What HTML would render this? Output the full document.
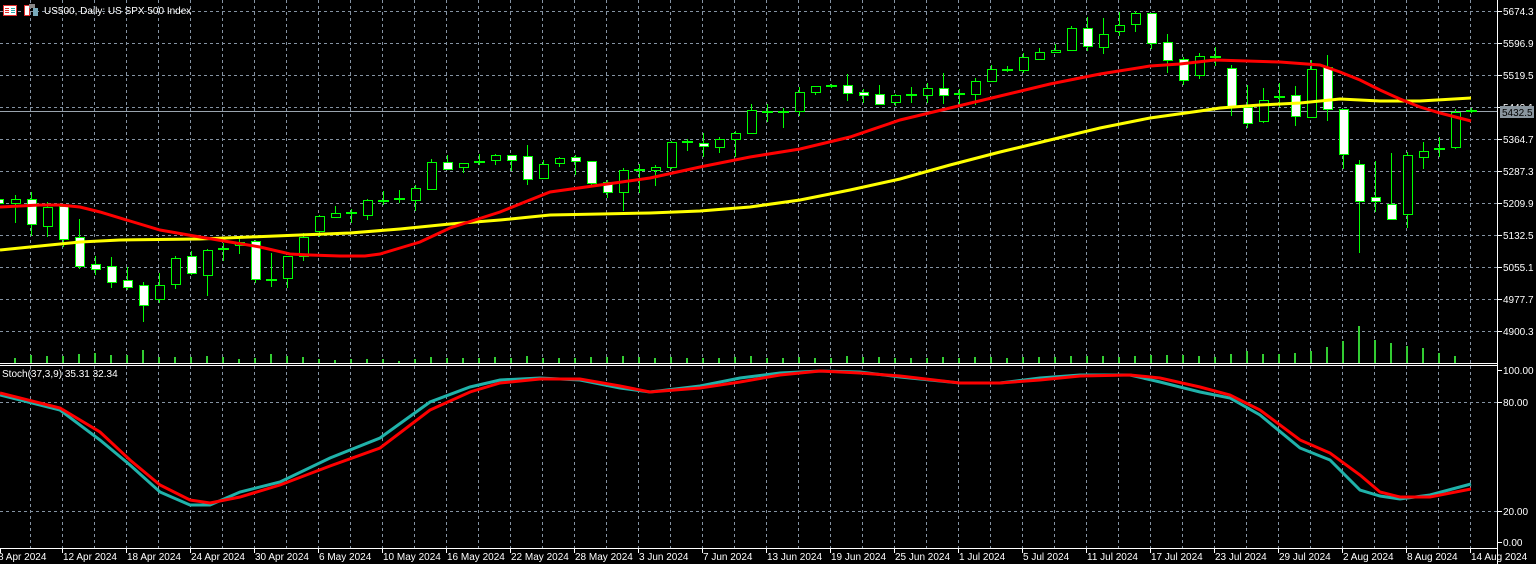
<!DOCTYPE html>
<html><head><meta charset="utf-8"><style>
html,body{margin:0;padding:0;background:#000;width:1536px;height:564px;overflow:hidden}
svg{display:block}
text{font-family:"Liberation Sans",sans-serif;font-size:10px;fill:#fff}
</style></head><body>
<svg width="1536" height="564" xmlns="http://www.w3.org/2000/svg">
<rect width="1536" height="564" fill="#000"/>
<g stroke="#8593a3" stroke-width="1" stroke-dasharray="3,3">
<path d="M30.5 0V363M62.5 0V363M94.5 0V363M126.5 0V363M158.5 0V363M190.5 0V363M222.5 0V363M254.5 0V363M286.5 0V363M318.5 0V363M350.5 0V363M382.5 0V363M414.5 0V363M446.5 0V363M478.5 0V363M510.5 0V363M542.5 0V363M574.5 0V363M606.5 0V363M638.5 0V363M670.5 0V363M702.5 0V363M734.5 0V363M766.5 0V363M798.5 0V363M830.5 0V363M862.5 0V363M894.5 0V363M926.5 0V363M958.5 0V363M990.5 0V363M1022.5 0V363M1054.5 0V363M1086.5 0V363M1118.5 0V363M1150.5 0V363M1182.5 0V363M1214.5 0V363M1246.5 0V363M1278.5 0V363M1310.5 0V363M1342.5 0V363M1374.5 0V363M1406.5 0V363M1438.5 0V363M1470.5 0V363"/>
<path d="M30.5 366V548M62.5 366V548M94.5 366V548M126.5 366V548M158.5 366V548M190.5 366V548M222.5 366V548M254.5 366V548M286.5 366V548M318.5 366V548M350.5 366V548M382.5 366V548M414.5 366V548M446.5 366V548M478.5 366V548M510.5 366V548M542.5 366V548M574.5 366V548M606.5 366V548M638.5 366V548M670.5 366V548M702.5 366V548M734.5 366V548M766.5 366V548M798.5 366V548M830.5 366V548M862.5 366V548M894.5 366V548M926.5 366V548M958.5 366V548M990.5 366V548M1022.5 366V548M1054.5 366V548M1086.5 366V548M1118.5 366V548M1150.5 366V548M1182.5 366V548M1214.5 366V548M1246.5 366V548M1278.5 366V548M1310.5 366V548M1342.5 366V548M1374.5 366V548M1406.5 366V548M1438.5 366V548M1470.5 366V548"/>
<path d="M0 11.5H1498M0 43.5H1498M0 75.5H1498M0 107.5H1498M0 139.5H1498M0 171.5H1498M0 203.5H1498M0 235.5H1498M0 267.5H1498M0 299.5H1498M0 331.5H1498M0 402.5H1498M0 511.5H1498"/>
</g>
<path d="M0 111.5H1498" stroke="#9aa4ae" stroke-width="1"/>
<!-- volumes -->
<path stroke="#32cd32" stroke-width="2" d="M15 363V358M31 363V355M47 363V356M63 363V356M79 363V354M95 363V353M111 363V355M127 363V355M143 363V350M159 363V357M175 363V357M191 363V357M207 363V356M223 363V357M239 363V359M255 363V358M271 363V354M287 363V356M303 363V357M319 363V359M335 363V360M351 363V359M367 363V359M383 363V359M399 363V361M415 363V359M431 363V357M447 363V358M463 363V358M479 363V358M495 363V357M511 363V358M527 363V356M543 363V358M559 363V358M575 363V358M591 363V357M607 363V357M623 363V356M639 363V357M655 363V358M671 363V357M687 363V358M703 363V358M719 363V358M735 363V357M751 363V356M767 363V358M783 363V358M799 363V357M815 363V358M831 363V358M847 363V356M863 363V357M879 363V357M895 363V358M911 363V358M927 363V358M943 363V357M959 363V358M975 363V357M991 363V357M1007 363V358M1023 363V357M1039 363V357M1055 363V357M1071 363V356M1087 363V356M1103 363V356M1119 363V357M1135 363V356M1151 363V355M1167 363V355M1183 363V355M1199 363V356M1215 363V357M1231 363V354M1247 363V351M1263 363V354M1279 363V354M1295 363V353M1311 363V351M1327 363V347M1343 363V341M1359 363V326M1375 363V340M1391 363V343M1407 363V346M1423 363V348M1439 363V353M1455 363V356"/>
<!-- wicks -->
<path stroke="#00ff00" stroke-width="1" fill="none" d="M-0.5 197V205M15.5 195V223M31.5 192V236M47.5 202V237M63.5 205V247M79.5 219V269M95.5 256V275M111.5 257V288M127.5 267V290M143.5 282V322M159.5 273V303M175.5 256V289M191.5 251V275M207.5 249V296M223.5 243V261M239.5 239V254M255.5 240V283M271.5 253V287M287.5 256V288M303.5 233V261M319.5 215V237M335.5 206V218M351.5 209V223M367.5 199V220M383.5 191V205M399.5 190V203M415.5 185V211M431.5 159V190M447.5 155V170M463.5 163V173M479.5 154V165M495.5 154V165M511.5 155V171M527.5 145V185M543.5 160V178M559.5 157V167M575.5 155V175M591.5 161V185M607.5 180V198M623.5 168V211M639.5 164V193M655.5 165V186M671.5 141V169M687.5 139V151M703.5 133V157M719.5 137V153M735.5 131V157M751.5 104V134M767.5 104V122M783.5 108V128M799.5 87V116M815.5 86V95M831.5 84V88M847.5 74V101M863.5 89V103M879.5 85V105M895.5 94V106M911.5 87V103M927.5 83V103M943.5 73V104M959.5 89V105M975.5 78V105M991.5 65V81M1007.5 66V72M1023.5 53V73M1039.5 48V59M1055.5 44V53M1071.5 26V50M1087.5 17V51M1103.5 18V54M1119.5 12V36M1135.5 11V32M1151.5 13V49M1167.5 34V73M1183.5 57V85M1199.5 53V79M1215.5 47V66M1231.5 65V116M1247.5 85V128M1263.5 88V123M1279.5 83V107M1295.5 86V126M1311.5 60V117M1327.5 55V121M1343.5 109V169M1359.5 160V253M1375.5 161V212M1391.5 153V220M1407.5 152V228M1423.5 142V169M1439.5 137V157M1455.5 109V149M1471.5 108V113"/>
<!-- dojis -->
<path stroke="#00ff00" stroke-width="2" d="M218 249H229M234 243.5H245M266 280H277M346 213H357M378 201H389M394 199H405M474 162H485M634 170H645M682 142H693M762 112H773M778 112H789M826 86H837M906 95H917M954 94H965M1002 70H1013M1210 57H1221M1434 149H1445M1466 111H1477M1274 97H1285M1058 51H1053"/>
<!-- green hollow bodies -->
<g fill="#000" stroke="#00ff00" stroke-width="1">
<rect x="11.5" y="199.5" width="9" height="4"/><rect x="43.5" y="207.5" width="9" height="19"/><rect x="155.5" y="285.5" width="9" height="14"/><rect x="171.5" y="258.5" width="9" height="26"/><rect x="203.5" y="250.5" width="9" height="25"/><rect x="235.5" y="242.5" width="9" height="3"/><rect x="283.5" y="256.5" width="9" height="22"/><rect x="299.5" y="237.5" width="9" height="19"/><rect x="315.5" y="216.5" width="9" height="15"/><rect x="331.5" y="213.5" width="9" height="4"/><rect x="363.5" y="200.5" width="9" height="15"/><rect x="411.5" y="188.5" width="9" height="12"/><rect x="427.5" y="162.5" width="9" height="27"/><rect x="459.5" y="163.5" width="9" height="4"/><rect x="491.5" y="155.5" width="9" height="5"/><rect x="539.5" y="164.5" width="9" height="14"/><rect x="555.5" y="158.5" width="9" height="5"/><rect x="619.5" y="170.5" width="9" height="22"/><rect x="651.5" y="167.5" width="9" height="3"/><rect x="667.5" y="142.5" width="9" height="25"/><rect x="715.5" y="139.5" width="9" height="8"/><rect x="731.5" y="133.5" width="9" height="6"/><rect x="747.5" y="110.5" width="9" height="23"/><rect x="795.5" y="92.5" width="9" height="19"/><rect x="811.5" y="86.5" width="9" height="6"/><rect x="891.5" y="95.5" width="9" height="7"/><rect x="923.5" y="88.5" width="9" height="7"/><rect x="971.5" y="81.5" width="9" height="13"/><rect x="987.5" y="69.5" width="9" height="12"/><rect x="1019.5" y="57.5" width="9" height="13"/><rect x="1035.5" y="52.5" width="9" height="7"/><rect x="1051.5" y="50.5" width="9" height="2"/><rect x="1067.5" y="28.5" width="9" height="22"/><rect x="1099.5" y="34.5" width="9" height="13"/><rect x="1115.5" y="25.5" width="9" height="6"/><rect x="1131.5" y="13.5" width="9" height="11"/><rect x="1195.5" y="56.5" width="9" height="19"/><rect x="1259.5" y="100.5" width="9" height="21"/><rect x="1307.5" y="69.5" width="9" height="48"/><rect x="1403.5" y="155.5" width="9" height="59"/><rect x="1419.5" y="151.5" width="9" height="6"/><rect x="1451.5" y="112.5" width="9" height="35"/>
</g>
<!-- white bodies -->
<g fill="#fff" stroke="#00ff00" stroke-width="1">
<rect x="-5.5" y="199.5" width="9" height="4"/><rect x="27.5" y="199.5" width="9" height="25"/><rect x="59.5" y="206.5" width="9" height="33"/><rect x="75.5" y="237.5" width="9" height="29"/><rect x="91.5" y="264.5" width="9" height="5"/><rect x="107.5" y="266.5" width="9" height="16"/><rect x="123.5" y="280.5" width="9" height="7"/><rect x="139.5" y="285.5" width="9" height="20"/><rect x="187.5" y="256.5" width="9" height="17"/><rect x="251.5" y="241.5" width="9" height="38"/><rect x="443.5" y="162.5" width="9" height="7"/><rect x="507.5" y="155.5" width="9" height="5"/><rect x="523.5" y="156.5" width="9" height="23"/><rect x="571.5" y="157.5" width="9" height="4"/><rect x="587.5" y="161.5" width="9" height="22"/><rect x="603.5" y="182.5" width="9" height="10"/><rect x="699.5" y="143.5" width="9" height="3"/><rect x="843.5" y="85.5" width="9" height="8"/><rect x="859.5" y="92.5" width="9" height="3"/><rect x="875.5" y="94.5" width="9" height="10"/><rect x="939.5" y="88.5" width="9" height="7"/><rect x="1083.5" y="28.5" width="9" height="18"/><rect x="1147.5" y="13.5" width="9" height="30"/><rect x="1163.5" y="42.5" width="9" height="18"/><rect x="1179.5" y="59.5" width="9" height="21"/><rect x="1227.5" y="68.5" width="9" height="39"/><rect x="1243.5" y="107.5" width="9" height="16"/><rect x="1291.5" y="95.5" width="9" height="21"/><rect x="1323.5" y="67.5" width="9" height="42"/><rect x="1339.5" y="109.5" width="9" height="45"/><rect x="1355.5" y="164.5" width="9" height="37"/><rect x="1371.5" y="197.5" width="9" height="4"/><rect x="1387.5" y="204.5" width="9" height="15"/>
</g>
<!-- MAs -->
<polyline fill="none" stroke="#ffff00" stroke-width="3" points="0,250 40,246 80,242 120,240 200,239 250,237 300,235 350,233 400,229 420,227 450,224 500,220 550,215 600,214 650,213 700,211 750,207 800,200 850,190 900,179 950,165 1000,152 1050,140 1100,128 1150,118 1200,111 1220,108 1260,105 1300,103 1340,99 1380,101 1420,101 1471,98"/>
<polyline fill="none" stroke="#ff0000" stroke-width="3" points="0,207 40,205 60,205 80,207 100,212 130,221 160,230 200,237 230,242 260,247 290,254 310,255 340,256 365,256 380,254 400,248 420,242 450,228 500,212 550,192 600,185 650,178 700,167 750,157 800,149 850,137 900,120 950,108 1000,96 1050,84 1100,74 1150,66 1180,64 1215,60 1280,62 1320,65 1340,72 1360,80 1380,90 1400,99 1420,107 1440,113 1471,121"/>
<!-- stochastic -->
<polyline fill="none" stroke="#20b2aa" stroke-width="3" points="0,395 60,410 100,440 130,465 160,492 190,505 210,505 240,492 280,482 330,458 380,438 430,402 470,387 500,380 540,378 580,380 620,388 650,392 700,386 740,378 780,373 820,371 860,372 900,377 960,383 1000,383 1040,378 1080,375 1130,375 1160,382 1200,392 1230,398 1260,415 1300,448 1330,460 1360,490 1380,496 1400,499 1430,495 1471,484"/>
<polyline fill="none" stroke="#ff0000" stroke-width="3" points="0,393 60,408 100,432 130,460 160,485 190,500 210,503 240,497 280,485 330,466 380,448 430,410 470,392 500,383 540,379 580,379 620,386 650,392 700,388 740,382 780,375 820,371 860,373 900,376 960,383 1000,383 1040,380 1080,376 1130,375 1160,378 1200,387 1230,395 1260,410 1300,440 1330,453 1360,475 1380,492 1400,497 1430,497 1471,489"/>
<!-- frame -->
<path stroke="#fff" stroke-width="1" fill="none" d="M0 363.5H1498M0 365.5H1498M0 548.5H1498M1497.5 0V564"/>
<path stroke="#fff" stroke-width="1" d="M1498 11.5h4M1498 43.5h4M1498 75.5h4M1498 107.5h4M1498 139.5h4M1498 171.5h4M1498 203.5h4M1498 235.5h4M1498 267.5h4M1498 299.5h4M1498 331.5h4M1498 370.5h4M1498 402.5h4M1498 511.5h4M1498 542.5h4M0.5 548V553M62.5 548V553M126.5 548V553M190.5 548V553M254.5 548V553M318.5 548V553M382.5 548V553M446.5 548V553M510.5 548V553M574.5 548V553M638.5 548V553M702.5 548V553M766.5 548V553M830.5 548V553M894.5 548V553M958.5 548V553M1022.5 548V553M1086.5 548V553M1150.5 548V553M1214.5 548V553M1278.5 548V553M1342.5 548V553M1406.5 548V553M1470.5 548V553"/>
<g>
<text x="1503" y="15">5674.3</text><text x="1503" y="47">5596.9</text><text x="1503" y="79">5519.5</text><text x="1503" y="111">5442.1</text><text x="1503" y="143">5364.7</text><text x="1503" y="175">5287.3</text><text x="1503" y="207">5209.9</text><text x="1503" y="239">5132.5</text><text x="1503" y="271">5055.1</text><text x="1503" y="303">4977.7</text><text x="1503" y="335">4900.3</text>
<text x="1503" y="374">100.00</text><text x="1503" y="406">80.00</text><text x="1503" y="515">20.00</text><text x="1503" y="546">0.00</text>
</g>
<rect x="1500" y="106" width="34" height="12" fill="#8a969f"/>
<text x="1502" y="116" style="fill:#000">5432.5</text>
<g>
<text x="-2" y="560">8 Apr 2024</text><text x="63" y="560">12 Apr 2024</text><text x="127" y="560">18 Apr 2024</text><text x="191" y="560">24 Apr 2024</text><text x="255" y="560">30 Apr 2024</text><text x="319" y="560">6 May 2024</text><text x="383" y="560">10 May 2024</text><text x="447" y="560">16 May 2024</text><text x="511" y="560">22 May 2024</text><text x="575" y="560">28 May 2024</text><text x="639" y="560">3 Jun 2024</text><text x="703" y="560">7 Jun 2024</text><text x="767" y="560">13 Jun 2024</text><text x="831" y="560">19 Jun 2024</text><text x="895" y="560">25 Jun 2024</text><text x="959" y="560">1 Jul 2024</text><text x="1023" y="560">5 Jul 2024</text><text x="1087" y="560">11 Jul 2024</text><text x="1151" y="560">17 Jul 2024</text><text x="1215" y="560">23 Jul 2024</text><text x="1279" y="560">29 Jul 2024</text><text x="1343" y="560">2 Aug 2024</text><text x="1407" y="560">8 Aug 2024</text><text x="1471" y="560">14 Aug 2024</text>
</g>
<!-- header icons -->
<rect x="3.5" y="5.5" width="13" height="10" fill="#fff" stroke="#e03030"/>
<path d="M5 8.5h4M5 10.5h4M5 12.5h4" stroke="#e03030"/><path d="M11 8.5h4M11 10.5h4M11 12.5h4" stroke="#2aa8a8"/>
<rect x="24.5" y="5.5" width="5" height="10" fill="#fff" stroke="#e03030"/>
<rect x="29" y="4" width="6" height="4" fill="#888"/>
<rect x="33" y="8" width="5" height="8" fill="#7ab"/>
<text x="44" y="14">US500, Daily:  US SPX 500 Index</text>
<text x="2" y="377">Stoch(37,3,9) 35.31 32.34</text>
</svg>
</body></html>
